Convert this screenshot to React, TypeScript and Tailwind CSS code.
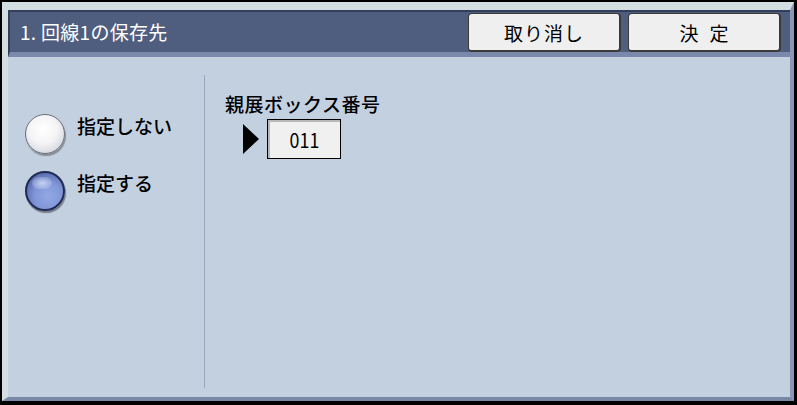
import React from "react";

const jp = { fontFamily: '"Noto Sans CJK JP", "Noto Sans", sans-serif' };

export default function App() {
  return (
    <div className="w-[797px] h-[405px] bg-black pt-[2px] pl-[2px] pr-[3px] pb-[4px]" style={jp}>
      <div className="h-full flex flex-col bg-[#c2d0e0] border-l-[6px] border-t-[8px] border-r-[4px] border-b-[4px] border-l-[#d2dee2] border-t-[#d2dee2] border-r-[#8797b5] border-b-[#7888a6]">
        {/* header */}
        <div className="h-[47px] flex items-stretch bg-[#4f5e7f] border-t-[2px] border-l-[2px] border-[#333f5a] border-b-[5px] border-b-[#7b8aac] pr-[9px]">
          <div className="flex-1 flex items-center pl-[10px] text-white text-[19px] leading-none tracking-[0.3px] pb-[2px]">
            1.&nbsp;回線1の保存先
          </div>
          <div className="flex items-start pt-[1px] gap-[7px]">
            <button className="w-[153px] h-[39px] rounded-[4px] bg-[#efefef] border border-[#3a3a3a] border-r-[2px] border-b-[2px] text-black text-[19px] leading-none flex items-center justify-center tracking-[1px]">
              取り消し
            </button>
            <button className="w-[153px] h-[39px] rounded-[4px] bg-[#efefef] border border-[#3a3a3a] border-r-[2px] border-b-[2px] text-black text-[19px] leading-none flex items-center justify-center gap-[11px]">
              <span>決</span>
              <span>定</span>
            </button>
          </div>
        </div>
        {/* body */}
        <div className="flex-1 flex">
          <div className="w-[196px] flex flex-col pt-[57px] pl-[17px] gap-[17px]">
            <div className="flex items-start gap-[12px]">
              <div className="w-[40px] h-[40px] rounded-full border border-[#6c6f7a] bg-[radial-gradient(circle_at_45%_38%,#ffffff_0%,#f4f4f6_45%,#d9dbe2_75%,#a9adb8_100%)] shadow-[1px_2px_1px_rgba(60,60,60,0.45)]" />
              <div className="text-[19px] leading-none text-black font-medium mt-[2px]">指定しない</div>
            </div>
            <div className="flex items-start gap-[12px]">
              <div className="relative w-[40px] h-[40px] rounded-full border-[2px] border-[#1f2a55] bg-[radial-gradient(circle_at_60%_65%,#93a9e6_0%,#7f95d6_45%,#5566a8_80%,#34427a_100%)] shadow-[1px_2px_1px_rgba(40,40,40,0.5)]">
                <div className="absolute left-[5px] top-[4px] w-[20px] h-[12px] rounded-full bg-[radial-gradient(ellipse_at_center,rgba(220,230,255,0.75),rgba(160,180,240,0))]" />
              </div>
              <div className="text-[19px] leading-none text-black font-medium mt-[2px]">指定する</div>
            </div>
          </div>
          <div className="w-px bg-[#9aa8bb] mt-[18px] mb-[9px]" />
          <div className="flex-1 flex flex-col pt-[37px] pl-[20px]">
            <div className="text-[19px] leading-none text-black font-medium tracking-[0.5px]">親展ボックス番号</div>
            <div className="flex items-center mt-[6px] ml-[18px] gap-[8px]">
              <svg width="16" height="30" viewBox="0 0 16 30">
                <polygon points="0,0 16,15 0,30" fill="#000" />
              </svg>
              <div className="w-[74px] h-[40px] bg-[#f0f0f0] border border-black shadow-[inset_2px_2px_0_#b8b8b8] flex items-center justify-center">
                <span className="inline-block text-[21px] leading-none text-black scale-x-[0.85]">011</span>
              </div>
            </div>
          </div>
        </div>
      </div>
    </div>
  );
}
